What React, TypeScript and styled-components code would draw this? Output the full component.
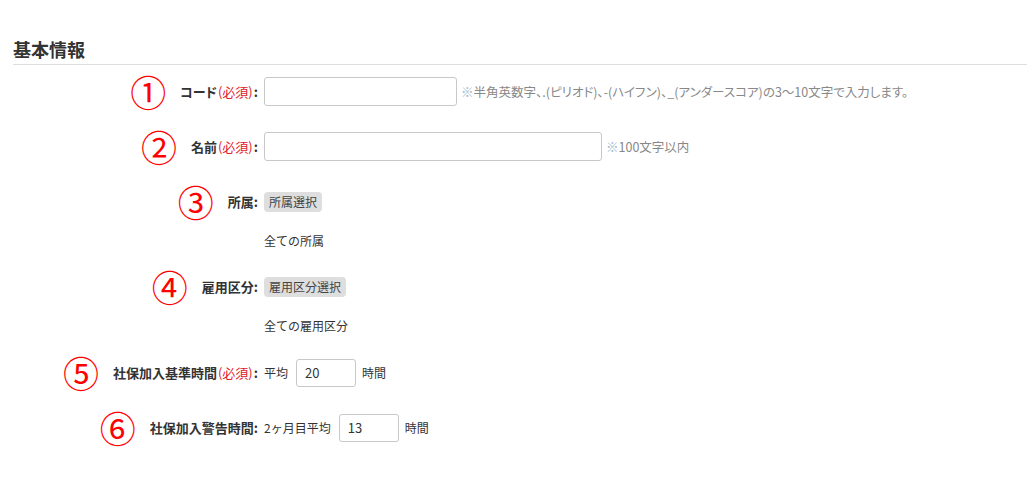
import React from "react";
import styled, { createGlobalStyle } from "styled-components";

const Global = createGlobalStyle`
  html, body { margin: 0; padding: 0; background: #fff; }
  body {
    font-family: "Noto Sans CJK JP", "Noto Sans", sans-serif;
    color: #333;
    font-size: 12px;
  }
`;

const Section = styled.section`
  padding: 37px 0 0 13px;
`;

const Heading = styled.h2`
  margin: 0;
  font-size: 18px;
  line-height: 24px;
  font-weight: 700;
  color: #333;
  padding-bottom: 3px;
  border-bottom: 1px solid #dedede;
`;

const Form = styled.div`
  display: flex;
  flex-direction: column;
  padding-top: 12px;
`;

const Field = styled.div<{ $after: number }>`
  display: grid;
  grid-template-columns: 245px 1fr;
  column-gap: 6px;
  margin-bottom: ${(p) => p.$after}px;
`;

const LabelCell = styled.div`
  display: flex;
  justify-content: flex-end;
  align-items: center;
  gap: 14px;
  height: 29px;
`;

const Mark = styled.span`
  color: #ff0000;
  font-size: 36px;
  line-height: 29px;
  font-family: "Noto Sans CJK JP", sans-serif;
`;

const LabelText = styled.span`
  font-weight: 700;
  font-size: 13px;
  color: #333;
  white-space: nowrap;
  font-feature-settings: "palt";
`;

const Required = styled.span`
  color: #e0202a;
  font-weight: 400;
  padding: 0 1px;
`;

const Content = styled.div`
  display: flex;
  flex-direction: column;
`;

const Line = styled.div`
  display: flex;
  align-items: center;
  height: 29px;
  white-space: nowrap;
`;

const TextInput = styled.input<{ $w: number }>`
  box-sizing: border-box;
  width: ${(p) => p.$w}px;
  height: 29px;
  border: 1px solid #c8c8c8;
  border-radius: 3px;
  padding: 0 8px;
  font-family: inherit;
  font-size: 13px;
  color: #333;
  outline: none;
  background: #fff;
`;

const SmallInput = styled(TextInput)`
  height: 28px;
  margin: 0 6px 0 8px;
`;

const Hint = styled.span`
  margin-left: 4px;
  color: #888;
  font-size: 12.5px;
  font-feature-settings: "palt";
`;

const HintMark = styled.span`
  color: #9bb3c9;
`;

const SelectButton = styled.button`
  height: 20px;
  padding: 0 5px;
  border: none;
  border-radius: 4px;
  background: #dedede;
  color: #444;
  font-family: inherit;
  font-size: 12px;
  line-height: 20px;
  cursor: pointer;
`;

const Note = styled.div`
  margin-top: 16px;
  line-height: 18px;
  font-size: 12px;
  color: #333;
`;

const Label: React.FC<{ mark: string; text: string; required?: boolean }> = ({
  mark,
  text,
  required,
}) => (
  <LabelCell>
    <Mark>{mark}</Mark>
    <LabelText>
      {text}
      {required && <Required>(必須)</Required>}:
    </LabelText>
  </LabelCell>
);

export default function App() {
  return (
    <>
      <Global />
      <Section>
        <Heading>基本情報</Heading>
        <Form>
          <Field $after={26}>
            <Label mark="①" text="コード" required />
            <Content>
              <Line>
                <TextInput $w={193} />
                <Hint>
                  <HintMark>※</HintMark>半角英数字、.(ピリオド)、-(ハイフン)、_(アンダースコア)の3～10文字で入力します。
                </Hint>
              </Line>
            </Content>
          </Field>
          <Field $after={26}>
            <Label mark="②" text="名前" required />
            <Content>
              <Line>
                <TextInput $w={338} />
                <Hint>
                  <HintMark>※</HintMark>100文字以内
                </Hint>
              </Line>
            </Content>
          </Field>
          <Field $after={22}>
            <Label mark="③" text="所属" />
            <Content>
              <Line>
                <SelectButton>所属選択</SelectButton>
              </Line>
              <Note>全ての所属</Note>
            </Content>
          </Field>
          <Field $after={23}>
            <Label mark="④" text="雇用区分" />
            <Content>
              <Line>
                <SelectButton>雇用区分選択</SelectButton>
              </Line>
              <Note>全ての雇用区分</Note>
            </Content>
          </Field>
          <Field $after={26}>
            <Label mark="⑤" text="社保加入基準時間" required />
            <Content>
              <Line>
                平均
                <SmallInput $w={60} defaultValue="20" />
                時間
              </Line>
            </Content>
          </Field>
          <Field $after={26}>
            <Label mark="⑥" text="社保加入警告時間" />
            <Content>
              <Line>
                2ヶ月目平均
                <SmallInput $w={60} defaultValue="13" />
                時間
              </Line>
            </Content>
          </Field>
        </Form>
      </Section>
    </>
  );
}
